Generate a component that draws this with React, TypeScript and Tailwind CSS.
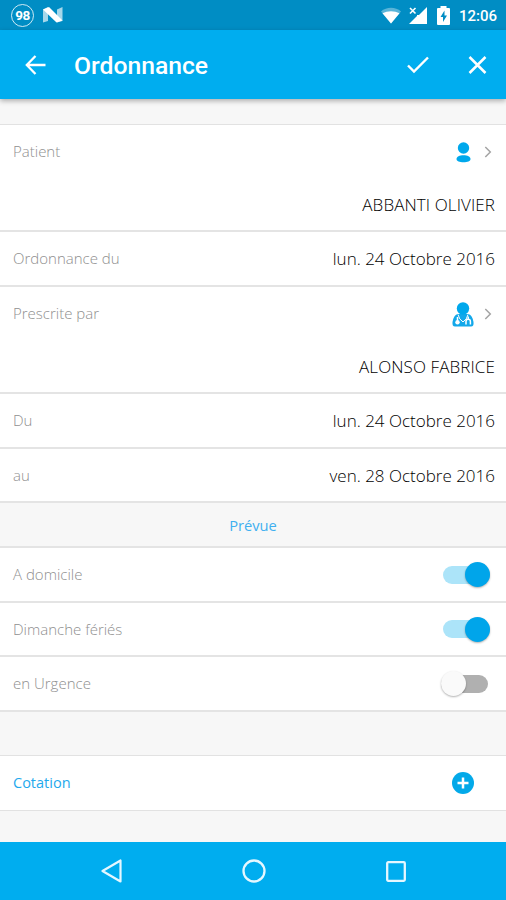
import React from "react";
import { twMerge } from "tailwind-merge";

const prescriptionRows = [
    { label: "Patient", value: "ABBANTI OLIVIER", icon: "patient", height: "h-[107px]" },
    { label: "Ordonnance du", value: "lun. 24 Octobre 2016", height: "h-[55px]" },
    { label: "Prescrite par", value: "ALONSO FABRICE", icon: "doctor", height: "h-[107px]" },
    { label: "Du", value: "lun. 24 Octobre 2016", height: "h-[55px]" },
    { label: "au", value: "ven. 28 Octobre 2016", height: "h-[54px]" },
];

const initialOptions = [
    { label: "A domicile", enabled: true, height: "h-[55px]" },
    { label: "Dimanche fériés", enabled: true, height: "h-[54px]" },
    { label: "en Urgence", enabled: false, height: "h-[55px]" },
];

function StatusBar() {
    return (
        <div className="flex h-[30px] items-center bg-[#008dc4] pl-[11px] pr-[9px] text-white">
            <div className="flex size-[23px] items-center justify-center rounded-full border-[1.5px] border-white/80 text-[13.500px] font-bold tracking-[-0.5px]">
                98
            </div>
            <svg className="ml-[9px]" width="20" height="16" viewBox="0 0 20 16" fill="white">
                <path d="M0 2.500 5 0v14L0 15.500z" opacity=".65" />
                <path d="M14 2.500 19.500 0v14L14 15.500z" opacity=".65" />
                <path d="M0 2.500 6 0 19.500 13.500 13.500 15.500z" />
            </svg>
            <div className="ml-auto flex items-center">
                <svg width="22" height="18" viewBox="0 0 22 18" fill="white">
                    <path d="M11 17.500 1 5.500C6.500.5 15.500.5 21 5.500z" opacity=".35" />
                    <path d="M11 17.500 2.500 7.300C7.500 4.500 14.500 4.500 19.500 7.300z" />
                </svg>
                <svg className="ml-[6px]" width="20" height="19" viewBox="0 0 20 19" fill="white">
                    <path d="M19 1v17H1L9 10V9l2 0z" />
                    <path d="m2 2 5.500 5.500M7.500 2 2 7.500" stroke="white" strokeWidth="1.600" />
                </svg>
                <svg className="ml-[9px]" width="13" height="19" viewBox="0 0 13 19">
                    <path d="M3.500 0h6v2H12q1 0 1 1v15q0 1-1 1H1q-1 0-1-1V3q0-1 1-1h2.500z" fill="white" />
                    <path d="M7.500 4.500 3.500 11h2.500v5L10 9.500H7.500z" fill="#008dc4" />
                </svg>
                <span className="ml-[9px] pt-[2px] text-[15px] font-medium leading-none">12:06</span>
            </div>
        </div>
    );
}

function Header() {
    return (
        <header className="relative flex h-[69px] items-center bg-[#00adef] pl-[25px] pr-[19px] text-white shadow-[0_2px_5px_rgba(0,0,0,0.3)]">
            <svg width="21" height="20" viewBox="0 0 21 20" fill="none" stroke="white" strokeWidth="2.300">
                <path d="M10.500 1 1.800 10l8.700 9M2 10h18.500" />
            </svg>
            <h1 className="ml-[28px] pt-[3px] text-[24.700px] font-medium leading-none">Ordonnance</h1>
            <svg className="ml-auto" width="22" height="18" viewBox="0 0 22 18" fill="none" stroke="white" strokeWidth="2.400">
                <path d="m1 9.500 6 6L21 1.500" />
            </svg>
            <svg className="ml-[39px]" width="19" height="18" viewBox="0 0 19 18" fill="none" stroke="white" strokeWidth="2.500">
                <path d="m1.500 1 16 16M17.500 1l-16 16" />
            </svg>
        </header>
    );
}

function PatientIcon() {
    return (
        <svg width="15" height="21" viewBox="0 0 15 21" fill="#00a8ec">
            <circle cx="7.500" cy="6" r="5.700" />
            <path d="M.5 17c0-2.500 3-3.800 7-3.800s7 1.300 7 3.800-3 3.200-7 3.200S.5 19.500.5 17z" />
        </svg>
    );
}

function DoctorIcon() {
    return (
        <svg width="22" height="25" viewBox="0 0 22 25">
            <path d="M5.500 12h11q4 1.500 5 8 .5 4.500-2.500 4.500H3Q0 24.500.5 20 1.500 13.500 5.500 12z" fill="#13a8ea" />
            <path d="M6 12.500q1 5 5 7.500 4-2.500 5-7.500" fill="#13a8ea" stroke="white" strokeWidth="1" />
            <circle cx="11" cy="6.500" r="6.200" fill="#00a8ec" />
            <path d="M5.500 15v3.500M14 22.500V19.500q0-2.200 2.200-2.200t2.200 2.200v3M16.200 14.500v3" fill="none" stroke="white" strokeWidth="1.500" />
            <circle cx="5.500" cy="20.300" r="2.200" fill="white" />
        </svg>
    );
}

function Chevron() {
    return (
        <svg width="8" height="12" viewBox="0 0 8 12" fill="none" stroke="#a4a4a4" strokeWidth="1.500">
            <path d="m1.300 1 5 5-5 5" />
        </svg>
    );
}

function Toggle({ enabled, onChange }: { enabled: boolean; onChange: () => void }) {
    return (
        <button
            role="switch"
            aria-checked={enabled}
            onClick={onChange}
            className={twMerge(
                "flex h-[18px] w-[47px] items-center rounded-full",
                enabled ? "mr-[5px] justify-end bg-[#ace4f9]" : "mr-[7px] justify-start bg-[#b0b0b0]"
            )}
        >
            <span
                className={twMerge(
                    "size-[25px] shrink-0 rounded-full shadow-[0_1px_2px_rgba(0,0,0,0.3)]",
                    enabled ? "bg-[#00a5ea]" : "bg-[#fafafa]"
                )}
            />
        </button>
    );
}

export default function App() {
    const [options, setOptions] = React.useState(initialOptions);

    const toggleOption = (index: number) => {
        setOptions(options.map((option, i) => (i === index ? { ...option, enabled: !option.enabled } : option)));
    };

    return (
        <div className="flex h-[900px] w-[506px] flex-col overflow-hidden bg-[#f7f7f7] font-['Roboto',sans-serif]">
            <StatusBar />
            <Header />
            <main className="flex flex-1 flex-col pt-[25px] font-['Open_Sans',sans-serif] text-[15px] font-light text-[#8f8f8f]">
                <div className="border-t-[1.5px] border-[#e2e2e2]">
                    {prescriptionRows.map((row) => (
                        <div key={row.label} className={twMerge("flex flex-col border-b-2 border-[#e4e4e4] bg-white pl-[13px] pr-[11px]", row.height)}>
                            <div className="flex h-[54px] shrink-0 items-center justify-between">
                                <span className="pb-[2px]">{row.label}</span>
                                {row.icon ? (
                                    <span className="flex items-center">
                                        {row.icon === "patient" ? <PatientIcon /> : <DoctorIcon />}
                                        <span className={row.icon === "patient" ? "ml-[13px] mr-[3px]" : "ml-[10px] mr-[3px]"}>
                                            <Chevron />
                                        </span>
                                    </span>
                                ) : (
                                    <span className="pb-px text-[17px] text-black">{row.value}</span>
                                )}
                            </div>
                            {row.icon && (
                                <div className="flex h-[53px] items-center justify-end text-[17px] tracking-[0.1px] text-black">{row.value}</div>
                            )}
                        </div>
                    ))}
                </div>
                <div className="flex h-[45px] items-center justify-center border-b-2 border-[#e4e4e4] pt-px text-[14.700px] font-normal text-[#3fb0f0]">Prévue</div>
                {options.map((option, index) => (
                    <div key={option.label} className={twMerge("flex items-center justify-between border-b-2 border-[#e4e4e4] bg-white px-[11px] pl-[13px]", option.height)}>
                        <span>{option.label}</span>
                        <Toggle enabled={option.enabled} onChange={() => toggleOption(index)} />
                    </div>
                ))}
                <div className="mt-[43px] flex h-[56px] items-center justify-between border-y-[1.5px] border-[#e2e2e2] bg-white pl-[13px] pr-[32px]">
                    <span className="text-[14.500px] font-normal text-[#1fa9ed]">Cotation</span>
                    <svg width="22" height="22" viewBox="0 0 22 22">
                        <circle cx="11" cy="11" r="11" fill="#03a9e9" />
                        <path d="M11 5.500v11M5.500 11h11" stroke="white" strokeWidth="2.500" />
                    </svg>
                </div>
            </main>
            <nav className="flex h-[58px] items-center bg-[#00adef] pl-[101px]">
                <svg width="21" height="24" viewBox="0 0 21 24" fill="none" stroke="#e5f7ff" strokeWidth="2.200" strokeLinejoin="round">
                    <path d="M19.500 1.500v21L1.500 12z" />
                </svg>
                <svg className="ml-[120px]" width="24" height="24" viewBox="0 0 24 24" fill="none" stroke="#e5f7ff" strokeWidth="2.300">
                    <circle cx="12" cy="12" r="10.500" />
                </svg>
                <svg className="ml-[120px]" width="20" height="21" viewBox="0 0 20 21" fill="none" stroke="#e5f7ff" strokeWidth="2.300">
                    <rect x="1.200" y="1.200" width="17.600" height="18.600" rx="1" />
                </svg>
            </nav>
        </div>
    );
}
